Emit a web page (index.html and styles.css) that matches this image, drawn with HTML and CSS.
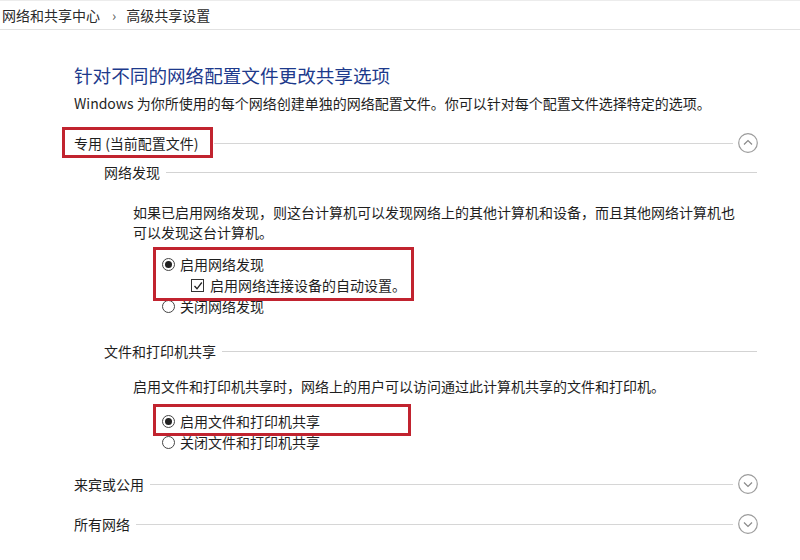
FILE: index.html
```html
<!DOCTYPE html>
<html lang="zh-CN">
<head>
<meta charset="utf-8">
<link rel="stylesheet" href="styles.css">
</head>
<body>
<div class="breadcrumb">
  <span>网络和共享中心</span>
  <span class="sep">›</span>
  <span>高级共享设置</span>
</div>
<main class="content">
  <h1 class="title">针对不同的网络配置文件更改共享选项</h1>
  <p class="desc">Windows 为你所使用的每个网络创建单独的网络配置文件。你可以针对每个配置文件选择特定的选项。</p>

  <div class="section-head first">
    <span class="section-label"><span class="mark mark-1"></span>专用 (当前配置文件)</span>
    <span class="rule"></span>
    <svg class="toggle" width="20" height="20" viewBox="0 0 20 20"><circle cx="10" cy="10" r="9.3" fill="#fff" stroke="#9c9c9c" stroke-width="1.2"/><path d="M6 11.5 L10 7.5 L14 11.5" fill="none" stroke="#8a8a8a" stroke-width="1.2"/></svg>
  </div>

  <div class="sub">
    <div class="sub-head"><span>网络发现</span><span class="rule"></span></div>
    <p class="para wrap">如果已启用网络发现，则这台计算机可以发现网络上的其他计算机和设备，而且其他网络计算机也可以发现这台计算机。</p>
    <div class="options opt-a">
      <div class="marked">
        <span class="mark mark-2"></span>
        <div class="row"><span class="radio on"></span>启用网络发现</div>
        <div class="row indent"><span class="check"><svg width="10" height="10" viewBox="0 0 10 10"><path d="M1.5 5 L4 7.8 L8.8 1.5" fill="none" stroke="#222" stroke-width="1.3"/></svg></span>启用网络连接设备的自动设置。</div>
      </div>
      <div class="row"><span class="radio"></span>关闭网络发现</div>
    </div>

    <div class="sub-head second"><span>文件和打印机共享</span><span class="rule"></span></div>
    <p class="para para-2">启用文件和打印机共享时，网络上的用户可以访问通过此计算机共享的文件和打印机。</p>
    <div class="options opt-b">
      <div class="marked">
        <span class="mark mark-3"></span>
        <div class="row"><span class="radio on"></span>启用文件和打印机共享</div>
      </div>
      <div class="row"><span class="radio"></span>关闭文件和打印机共享</div>
    </div>
  </div>

  <div class="section-head guest">
    <span class="section-label">来宾或公用</span>
    <span class="rule"></span>
    <svg class="toggle" width="20" height="20" viewBox="0 0 20 20"><circle cx="10" cy="10" r="9.3" fill="#fff" stroke="#9c9c9c" stroke-width="1.2"/><path d="M6 8.5 L10 12.5 L14 8.5" fill="none" stroke="#8a8a8a" stroke-width="1.2"/></svg>
  </div>
  <div class="section-head all">
    <span class="section-label">所有网络</span>
    <span class="rule"></span>
    <svg class="toggle" width="20" height="20" viewBox="0 0 20 20"><circle cx="10" cy="10" r="9.3" fill="#fff" stroke="#9c9c9c" stroke-width="1.2"/><path d="M6 8.5 L10 12.5 L14 8.5" fill="none" stroke="#8a8a8a" stroke-width="1.2"/></svg>
  </div>
</main>
</body>
</html>
```

FILE: styles.css
```css
* { box-sizing: border-box; }
html, body { margin: 0; padding: 0; background: #fff; }
body {
  font-family: "Noto Sans CJK SC", "Noto Sans", sans-serif;
  font-size: 14px;
  color: #1e1e1e;
  width: 800px;
  height: 560px;
  overflow: hidden;
}
.breadcrumb {
  height: 30px;
  border-top: 1px solid #ececec;
  border-bottom: 1px solid #e2e2e2;
  display: flex;
  align-items: center;
  padding-left: 2px;
  font-size: 14px;
  line-height: 20px;
  color: #2a2a2a;
}
.breadcrumb .sep { margin: 0 10px 0 12px; color: #555; }
.content { padding-left: 74px; width: 758px; }
.title {
  margin: 33px 0 0;
  font-size: 18.6px;
  line-height: 24px;
  font-weight: normal;
  color: #1d3a8c;
}
.desc { margin: 6px 0 0; line-height: 20px; }
.section-head {
  display: flex;
  align-items: center;
  height: 20px;
  line-height: 20px;
}
.section-head.first { margin-top: 20px; }
.section-head.guest { margin-top: 21px; }
.section-head.all { margin-top: 20px; }
.section-label { position: relative; white-space: nowrap; }
.section-head .rule {
  flex: 1;
  height: 1px;
  background: #d6d6d6;
  margin: 0 5px 0 6px;
}
.section-head.first .rule { margin-left: 15px; }
.toggle { flex: none; display: block; }
.sub { padding-left: 30px; }
.sub-head {
  display: flex;
  align-items: center;
  height: 20px;
  line-height: 20px;
  margin-top: 9px;
  width: 653px;
}
.sub-head.second { margin-top: 24px; }
.sub-head .rule { flex: 1; height: 1px; background: #d3d3d3; margin-left: 6px; }
.para { margin: 20px 0 0 29px; line-height: 20px; }
.para.wrap { width: 606px; }
.para.para-2 { margin-top: 15px; }
.options { margin-left: 58px; }
.opt-a { margin-top: 12px; }
.opt-b { margin-top: 15px; }
.marked { position: relative; }
.row {
  display: flex;
  align-items: center;
  height: 21px;
  line-height: 21px;
  white-space: nowrap;
}
.row.indent { padding-left: 29px; }
.radio {
  width: 13px;
  height: 13px;
  border: 1px solid #444;
  border-radius: 50%;
  margin-right: 5px;
  display: flex;
  align-items: center;
  justify-content: center;
  background: #fff;
}
.radio.on::after {
  content: "";
  width: 7px;
  height: 7px;
  border-radius: 50%;
  background: #222;
}
.check {
  width: 13px;
  height: 13px;
  border: 1px solid #333;
  margin-right: 6px;
  display: flex;
  align-items: center;
  justify-content: center;
  background: #fff;
}
.check svg { display: block; }
.mark {
  position: absolute;
  border: 3px solid #c1232f;
  pointer-events: none;
  z-index: 2;
}
.mark-1 { left: -12px; top: -6px; width: 151px; height: 31px; }
.mark-2 { left: -9px; top: -7px; width: 261px; bottom: -5px; }
.mark-3 { left: -9px; top: -7px; width: 258px; bottom: -4px; }
```
